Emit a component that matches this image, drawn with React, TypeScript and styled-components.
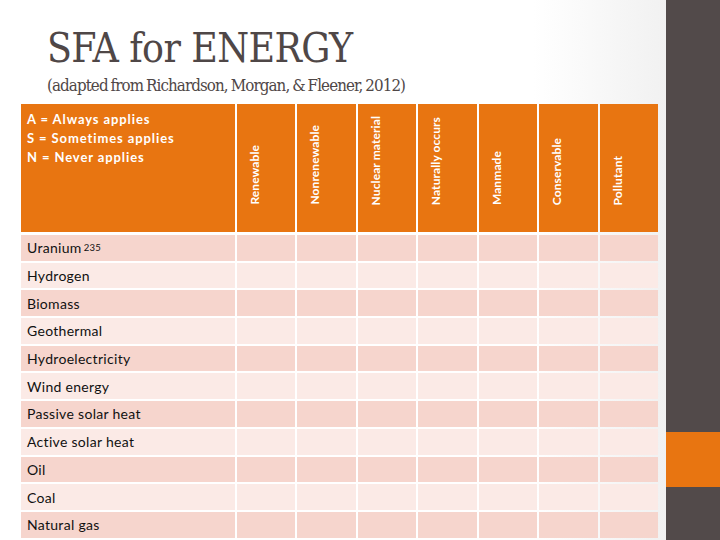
import React from "react";
import styled, { createGlobalStyle } from "styled-components";

const Global = createGlobalStyle`
  html, body { margin: 0; padding: 0; width: 720px; height: 540px; overflow: hidden; background: #fff; }
  * { box-sizing: border-box; }
`;

const Page = styled.div`
  display: flex;
  width: 720px;
  height: 540px;
  overflow: hidden;
`;

const Main = styled.div`
  flex: 0 0 666px;
  height: 540px;
  display: flex;
  flex-direction: column;
  padding: 0 8px 0 21px;
  background: linear-gradient(90deg, #ffffff 0%, #ffffff 80%, #f1f1f1 100%);
  overflow: hidden;
`;

const Sidebar = styled.div`
  flex: 1;
  height: 540px;
  display: flex;
  flex-direction: column;
  background: #524a4a;
`;

const SideAccent = styled.div`
  margin-top: 432px;
  height: 55px;
  background: #e87511;
`;

const Title = styled.h1`
  margin: 23px 0 0 26px;
  font-family: "DejaVu Serif", serif;
  font-stretch: condensed;
  font-weight: normal;
  font-size: 40.5px;
  line-height: 50px;
  color: #4f4747;
  letter-spacing: -0.6px;
`;

const Subtitle = styled.div`
  margin: 0 0 0 26px;
  font-family: "DejaVu Serif", serif;
  font-stretch: condensed;
  font-size: 16.8px;
  line-height: 24px;
  color: #4f4747;
  letter-spacing: -0.9px;
  word-spacing: -1px;
`;

const Table = styled.div`
  margin-top: 7px;
  display: grid;
  grid-template-columns: 214px repeat(7, 1fr);
  grid-template-rows: 129px;
  grid-auto-rows: 25.7px;
  gap: 2px;
  width: 637px;
`;

const HeadCell = styled.div`
  background: #e87511;
  color: #fff;
  font-family: Lato, "Liberation Sans", sans-serif;
  font-weight: bold;
`;

const Legend = styled(HeadCell)`
  padding: 6px 6px;
  font-size: 13px;
  line-height: 19px;
  letter-spacing: 0.9px;
  margin-bottom: 1px;
`;

const LabelCell = styled(HeadCell)`
  display: flex;
  align-items: flex-end;
  justify-content: flex-start;
  padding: 0 0 27px 9px;
  margin-bottom: 1px;
  font-size: 12px;
`;

const Vertical = styled.span`
  writing-mode: vertical-rl;
  transform: rotate(180deg);
  line-height: 17px;
  white-space: nowrap;
  letter-spacing: 0.1px;
`;

const Cell = styled.div<{ $alt: boolean }>`
  background: ${(p) => (p.$alt ? "#fbeae6" : "#f6d5cd")};
`;

const NameCell = styled(Cell)`
  display: flex;
  align-items: center;
  padding-left: 6px;
  font-family: Lato, "Liberation Sans", sans-serif;
  font-size: 14px;
  letter-spacing: 0.3px;
  color: #111;
`;

const Sup = styled.sup`
  font-size: 9.5px;
  margin-left: 2px;
  vertical-align: 6px;
  line-height: 0;
`;

const columns = [
  "Renewable",
  "Nonrenewable",
  "Nuclear material",
  "Naturally occurs",
  "Manmade",
  "Conservable",
  "Pollutant",
];

const rows = [
  "Uranium",
  "Hydrogen",
  "Biomass",
  "Geothermal",
  "Hydroelectricity",
  "Wind energy",
  "Passive solar heat",
  "Active solar heat",
  "Oil",
  "Coal",
  "Natural gas",
];

export default function App() {
  return (
    <Page>
      <Global />
      <Main>
        <Title>SFA for ENERGY</Title>
        <Subtitle>(adapted from Richardson, Morgan, &amp; Fleener, 2012)</Subtitle>
        <Table>
          <Legend>
            A = Always applies
            <br />S = Sometimes applies
            <br />N = Never applies
          </Legend>
          {columns.map((c) => (
            <LabelCell key={c}>
              <Vertical>{c}</Vertical>
            </LabelCell>
          ))}
          {rows.map((r, i) => (
            <React.Fragment key={r}>
              <NameCell $alt={i % 2 === 1}>
                {r}
                {r === "Uranium" && <Sup>235</Sup>}
              </NameCell>
              {columns.map((c) => (
                <Cell key={c} $alt={i % 2 === 1} />
              ))}
            </React.Fragment>
          ))}
        </Table>
      </Main>
      <Sidebar>
        <SideAccent />
      </Sidebar>
    </Page>
  );
}
